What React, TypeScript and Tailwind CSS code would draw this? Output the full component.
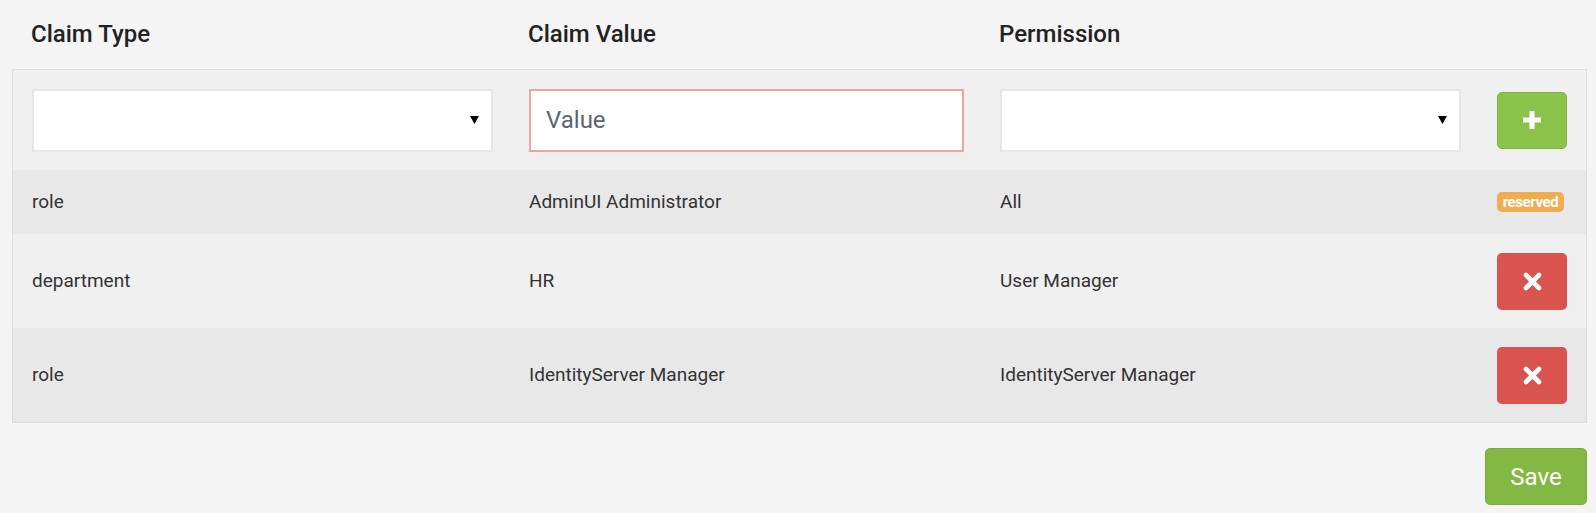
import React from 'react';

type Claim = {
  type: string;
  value: string;
  permission: string;
  reserved?: boolean;
};

const claims: Claim[] = [
  { type: 'role', value: 'AdminUI Administrator', permission: 'All', reserved: true },
  { type: 'department', value: 'HR', permission: 'User Manager' },
  { type: 'role', value: 'IdentityServer Manager', permission: 'IdentityServer Manager' },
];

const cols = 'grid grid-cols-[461px_435px_461px_70px] gap-x-[36px] items-center';

const PlusIcon = () => (
  <svg width="20" height="20" viewBox="0 0 20 20">
    <rect x="7.5" y="1" width="5" height="18" rx="0.5" fill="#fff" />
    <rect x="1" y="7.5" width="18" height="5" rx="0.5" fill="#fff" />
  </svg>
);

const TimesIcon = () => (
  <svg width="19" height="19" viewBox="0 0 19 19">
    <path d="M3 3 L16 16 M16 3 L3 16" stroke="#fff" strokeWidth="4.6" strokeLinecap="round" />
  </svg>
);

const Select = () => (
  <div className="relative h-[63px] w-full bg-white border-2 border-[#e6e6e6]">
    <svg
      className="absolute right-[12px] top-[25px]"
      width="9"
      height="8"
      viewBox="0 0 9 8"
    >
      <path d="M0 0 H9 L4.5 8 Z" fill="#000" />
    </svg>
  </div>
);

const App: React.FC = () => {
  return (
    <div
      className="w-full h-[513px] bg-[#f4f4f4] text-[#333]"
      style={{ fontFamily: 'Roboto, "Liberation Sans", sans-serif' }}
    >
      {/* Header */}
      <div className={`${cols} h-[69px] ml-[12px] px-[19px]`}>
        <h3 className="text-[24px] font-medium text-[#222] -mt-[1px]">Claim Type</h3>
        <h3 className="text-[24px] font-medium text-[#222] -mt-[1px]">Claim Value</h3>
        <h3 className="text-[24px] font-medium text-[#222] -mt-[1px]">Permission</h3>
        <div />
      </div>

      {/* Table */}
      <div className="ml-[12px] w-[1575px] border border-[#dddddd] bg-[#f0f0f0]">
        <div className={`${cols} h-[100px] px-[19px]`}>
          <Select />
          <input
            placeholder="Value"
            className="h-[63px] w-full bg-white border-2 border-[#eba5a5] px-[15px] text-[24px] text-[#333] placeholder:text-[#5b6670] outline-none"
          />
          <Select />
          <button className="h-[57px] w-[70px] rounded-[5px] bg-[#8bc34a] border border-[#7fb53f] flex items-center justify-center">
            <PlusIcon />
          </button>
        </div>

        {claims.map((c, i) => (
          <div
            key={i}
            className={`${cols} px-[19px] text-[19px] ${
              i % 2 === 0 ? 'bg-[#e8e8e8]' : 'bg-[#f0f0f0]'
            } ${i === 0 ? 'h-[64px]' : 'h-[94px]'}`}
          >
            <span>{c.type}</span>
            <span>{c.value}</span>
            <span>{c.permission}</span>
            {c.reserved ? (
              <span className="w-[67px] h-[20px] rounded-[5px] bg-[#f0ad4e] text-white text-[15px] font-bold leading-[20px] text-center tracking-[-0.4px]">
                reserved
              </span>
            ) : (
              <button className="h-[57px] w-[70px] rounded-[5px] bg-[#d9534f] flex items-center justify-center">
                <TimesIcon />
              </button>
            )}
          </div>
        ))}
      </div>

      <div className="flex justify-end w-[1587px] mt-[25px]">
        <button className="h-[57px] w-[102px] rounded-[5px] bg-[#84b844] border border-[#7aad3c] text-white text-[24px]">
          Save
        </button>
      </div>
    </div>
  );
};

export default App;
